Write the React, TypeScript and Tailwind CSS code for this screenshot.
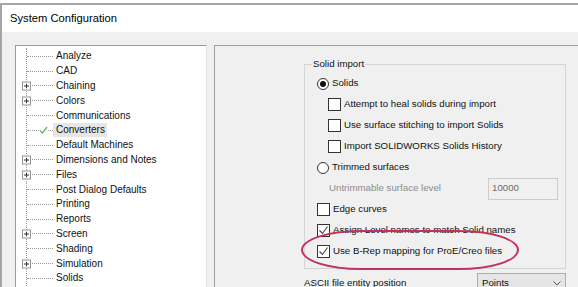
import { ReactNode } from "react";

const treeItems = [
  { label: "Analyze" },
  { label: "CAD" },
  { label: "Chaining", plus: true },
  { label: "Colors", plus: true },
  { label: "Communications" },
  { label: "Converters", checked: true },
  { label: "Default Machines" },
  { label: "Dimensions and Notes", plus: true },
  { label: "Files", plus: true },
  { label: "Post Dialog Defaults" },
  { label: "Printing" },
  { label: "Reports" },
  { label: "Screen", plus: true },
  { label: "Shading" },
  { label: "Simulation", plus: true },
  { label: "Solids" },
];

function TreeRow({ label, plus, checked }: { label: string; plus?: boolean; checked?: boolean }) {
  return (
    <div className="flex items-center h-[14.8px]">
      <div className="relative w-[26px] h-full flex items-center shrink-0">
        <div className="w-full border-t border-dotted border-[#9a9a9a]" />
        {plus && (
          <div className="absolute left-[-5px] top-1/2 -translate-y-1/2 w-[9px] h-[9px] border border-[#949494] bg-white flex items-center justify-center">
            <svg width="5" height="5" viewBox="0 0 5 5">
              <path d="M0 2.5h5M2.5 0v5" stroke="#333" strokeWidth="1" />
            </svg>
          </div>
        )}
        {checked && (
          <svg className="absolute left-[12px] top-1/2 -translate-y-1/2 bg-white" width="9" height="8" viewBox="0 0 9 8">
            <path d="M1 4.5l2.5 2.5L8 1" fill="none" stroke="#5cb85c" strokeWidth="1.3" />
          </svg>
        )}
      </div>
      <span className={`pl-[3px] pr-[2px] leading-[14px] whitespace-nowrap ${checked ? "bg-[#e6e6e6]" : ""}`}>
        {label}
      </span>
    </div>
  );
}

function CheckBox({ checked }: { checked?: boolean }) {
  return (
    <div className="w-[13px] h-[13px] border border-[#333] bg-white shrink-0 flex items-center justify-center">
      {checked && (
        <svg width="11" height="11" viewBox="0 0 11 11">
          <path d="M1.5 5.5l3 3 5-7" fill="none" stroke="#444" strokeWidth="1.1" />
        </svg>
      )}
    </div>
  );
}

function Radio({ on }: { on?: boolean }) {
  return (
    <div className="w-[12px] h-[12px] rounded-full border border-[#333] bg-white shrink-0 flex items-center justify-center">
      {on && <div className="w-[6px] h-[6px] rounded-full bg-[#111]" />}
    </div>
  );
}

function Row({ children, indent }: { children: ReactNode; indent?: boolean }) {
  return (
    <div className={`flex items-center h-[21px] gap-[3px] ${indent ? "pl-[23px]" : "pl-[12px]"}`}>{children}</div>
  );
}

export default function App() {
  return (
    <div className="w-[578px] h-[287px] overflow-hidden bg-white pt-[3px] text-[10px] text-[#111]" style={{ fontFamily: "'Liberation Sans', Arial, sans-serif" }}>
      <div className="h-full border-t-2 border-l-2 border-[#a6a6a6] flex flex-col">
        <div className="h-[27px] bg-white flex items-center pl-[8px] text-[11.2px] text-black shrink-0">System Configuration</div>
        <div className="flex-1 bg-[#f0f0f0] pt-[13px] pl-[13px] flex overflow-hidden">
          <div className="w-[192px] shrink-0 bg-white border-l border-t border-[#9b9b9b] border-r-[#e3e3e3] border-r pt-[2px]">
            <div className="ml-[10px] border-l border-dotted border-[#9a9a9a] pt-[1px]">
              {treeItems.map((t) => (
                <TreeRow key={t.label} {...t} />
              ))}
            </div>
          </div>
          <div className="ml-[7px] flex-1 border-l border-t border-[#a0a0a0] pl-[89px] pt-[12px] relative text-[9.7px]">
            <fieldset className="w-[262px] border border-[#d5d5d5] pb-[6px]">
              <legend className="ml-[7px] px-[1px] leading-[12px]">Solid import</legend>
              <div className="mt-[3px]">
                <Row>
                  <Radio on />
                  <span>Solids</span>
                </Row>
                <Row indent>
                  <CheckBox />
                  <span>Attempt to heal solids during import</span>
                </Row>
                <Row indent>
                  <CheckBox />
                  <span>Use surface stitching to import Solids</span>
                </Row>
                <Row indent>
                  <CheckBox />
                  <span>Import SOLIDWORKS Solids History</span>
                </Row>
                <Row>
                  <Radio />
                  <span>Trimmed surfaces</span>
                </Row>
                <div className="flex items-center h-[21px] pl-[24px]">
                  <span className="text-[#8c8c8c] w-[159px]">Untrimmable surface level</span>
                  <div className="w-[70px] h-[22px] border border-[#cccccc] flex items-center pl-[3px] text-[#6d6d6d]">10000</div>
                </div>
                <Row>
                  <CheckBox />
                  <span>Edge curves</span>
                </Row>
                <Row>
                  <CheckBox checked />
                  <span>Assign Level names to match Solid names</span>
                </Row>
                <Row>
                  <CheckBox checked />
                  <span>Use B-Rep mapping for ProE/Creo files</span>
                </Row>
              </div>
            </fieldset>
            <div className="flex items-center mt-[4px] w-[262px] justify-between">
              <span>ASCII file entity position</span>
              <div className="w-[89px] h-[21px] border border-[#adadad] bg-[#e5e5e5] flex items-center justify-between px-[4px]">
                <span>Points</span>
                <svg width="8" height="5" viewBox="0 0 8 5">
                  <path d="M0.5 0.5l3.5 3.5 3.5-3.5" fill="none" stroke="#555" strokeWidth="1" />
                </svg>
              </div>
            </div>
            <div className="absolute left-[86px] top-[184px] w-[218px] h-[40px] border-2 border-[#c3305c] rounded-[60px/20px] pointer-events-none" />
          </div>
        </div>
      </div>
    </div>
  );
}
